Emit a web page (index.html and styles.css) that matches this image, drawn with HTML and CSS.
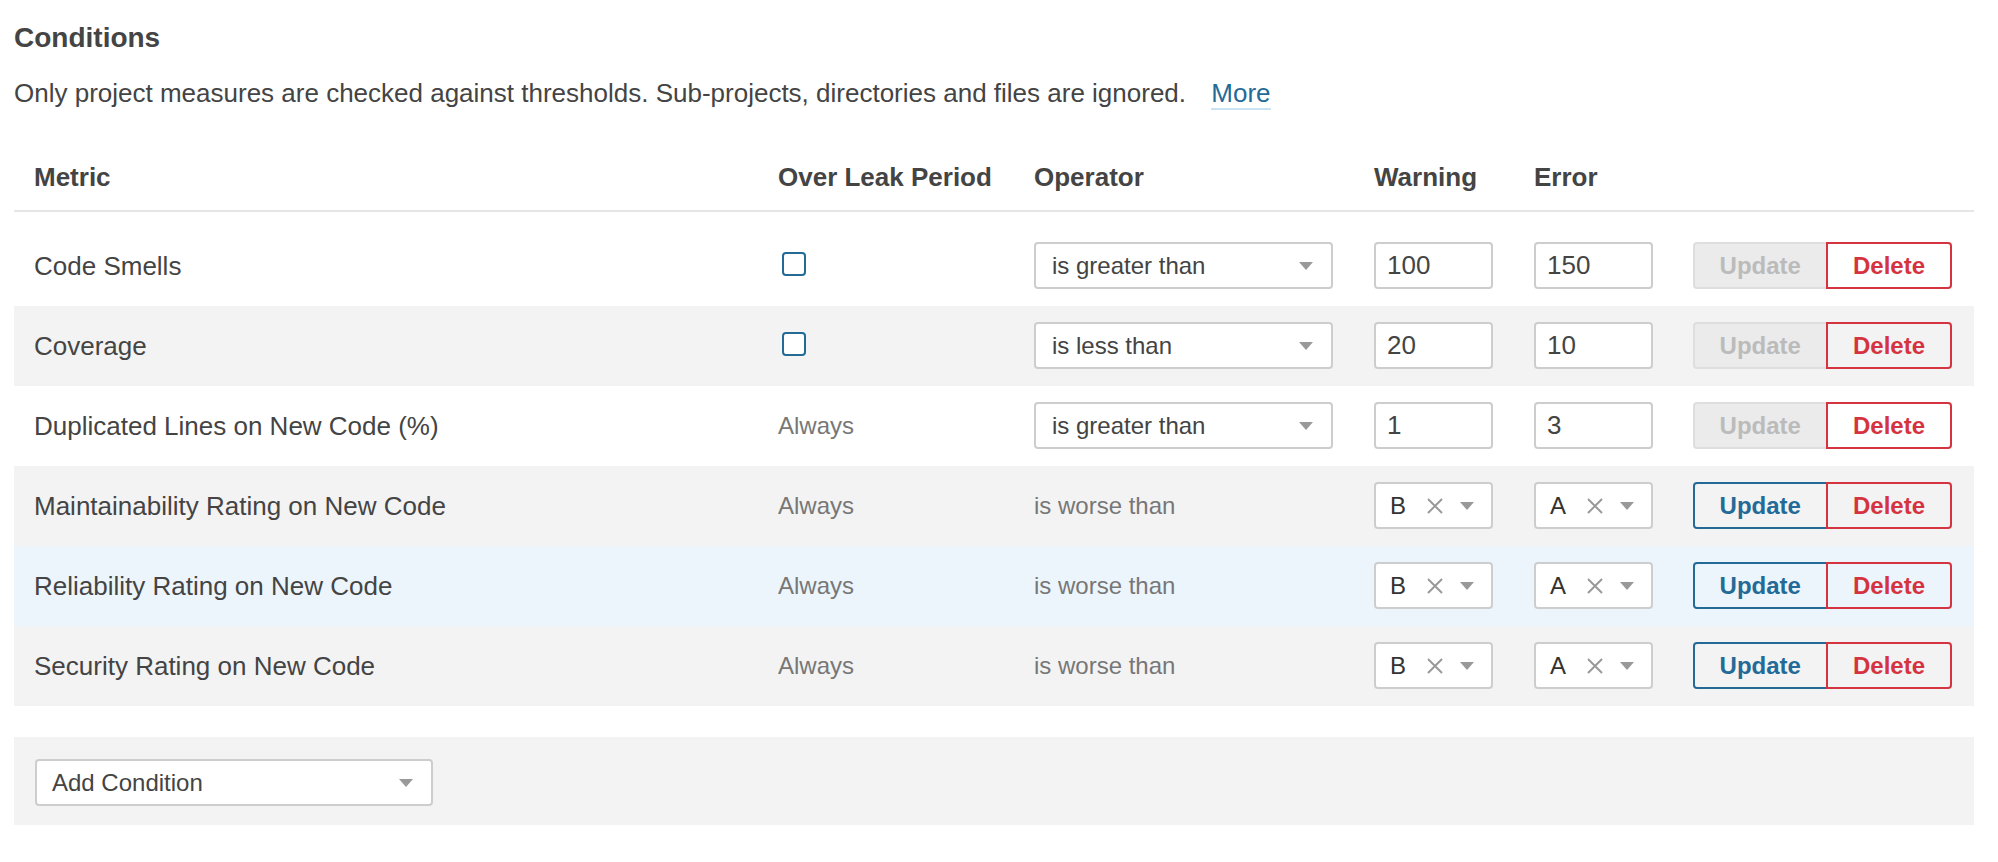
FILE: index.html
```html
<!DOCTYPE html>
<html lang="en">
<head>
<meta charset="utf-8">
<title>Conditions</title>
<link rel="stylesheet" href="styles.css">
</head>
<body>
<div class="page">
  <h3 class="title">Conditions</h3>
  <p class="intro">Only project measures are checked against thresholds. Sub-projects, directories and files are ignored. <a class="more" href="#">More</a></p>

  <table class="conds">
    <colgroup>
      <col class="c-metric"><col class="c-leak"><col class="c-op"><col class="c-warn"><col class="c-err"><col class="c-act">
    </colgroup>
    <thead>
      <tr><th>Metric</th><th>Over Leak Period</th><th>Operator</th><th>Warning</th><th>Error</th><th></th></tr>
    </thead>
    <tbody>
      <tr>
        <td>Code Smells</td>
        <td><span class="checkbox"></span></td>
        <td><div class="select op"><span class="select-value">is greater than</span><span class="arrow"></span></div></td>
        <td><input class="num" type="text" value="100"></td>
        <td><input class="num" type="text" value="150"></td>
        <td><div class="btns"><button class="btn btn-update" disabled>Update</button><button class="btn btn-delete">Delete</button></div></td>
      </tr>
      <tr class="row-alt">
        <td>Coverage</td>
        <td><span class="checkbox"></span></td>
        <td><div class="select op"><span class="select-value">is less than</span><span class="arrow"></span></div></td>
        <td><input class="num" type="text" value="20"></td>
        <td><input class="num" type="text" value="10"></td>
        <td><div class="btns"><button class="btn btn-update" disabled>Update</button><button class="btn btn-delete">Delete</button></div></td>
      </tr>
      <tr>
        <td>Duplicated Lines on New Code (%)</td>
        <td class="muted">Always</td>
        <td><div class="select op"><span class="select-value">is greater than</span><span class="arrow"></span></div></td>
        <td><input class="num" type="text" value="1"></td>
        <td><input class="num" type="text" value="3"></td>
        <td><div class="btns"><button class="btn btn-update" disabled>Update</button><button class="btn btn-delete">Delete</button></div></td>
      </tr>
      <tr class="row-alt">
        <td>Maintainability Rating on New Code</td>
        <td class="muted">Always</td>
        <td class="muted">is worse than</td>
        <td><div class="select rating"><span class="rating-value">B</span><svg class="clear" viewBox="0 0 18 18" width="18" height="18"><path d="M2 2 L16 16 M16 2 L2 16" stroke="#999" stroke-width="2" fill="none"/></svg><span class="arrow"></span></div></td>
        <td><div class="select rating"><span class="rating-value">A</span><svg class="clear" viewBox="0 0 18 18" width="18" height="18"><path d="M2 2 L16 16 M16 2 L2 16" stroke="#999" stroke-width="2" fill="none"/></svg><span class="arrow"></span></div></td>
        <td><div class="btns"><button class="btn btn-update">Update</button><button class="btn btn-delete">Delete</button></div></td>
      </tr>
      <tr class="row-hl">
        <td>Reliability Rating on New Code</td>
        <td class="muted">Always</td>
        <td class="muted">is worse than</td>
        <td><div class="select rating"><span class="rating-value">B</span><svg class="clear" viewBox="0 0 18 18" width="18" height="18"><path d="M2 2 L16 16 M16 2 L2 16" stroke="#999" stroke-width="2" fill="none"/></svg><span class="arrow"></span></div></td>
        <td><div class="select rating"><span class="rating-value">A</span><svg class="clear" viewBox="0 0 18 18" width="18" height="18"><path d="M2 2 L16 16 M16 2 L2 16" stroke="#999" stroke-width="2" fill="none"/></svg><span class="arrow"></span></div></td>
        <td><div class="btns"><button class="btn btn-update">Update</button><button class="btn btn-delete">Delete</button></div></td>
      </tr>
      <tr class="row-alt">
        <td>Security Rating on New Code</td>
        <td class="muted">Always</td>
        <td class="muted">is worse than</td>
        <td><div class="select rating"><span class="rating-value">B</span><svg class="clear" viewBox="0 0 18 18" width="18" height="18"><path d="M2 2 L16 16 M16 2 L2 16" stroke="#999" stroke-width="2" fill="none"/></svg><span class="arrow"></span></div></td>
        <td><div class="select rating"><span class="rating-value">A</span><svg class="clear" viewBox="0 0 18 18" width="18" height="18"><path d="M2 2 L16 16 M16 2 L2 16" stroke="#999" stroke-width="2" fill="none"/></svg><span class="arrow"></span></div></td>
        <td><div class="btns"><button class="btn btn-update">Update</button><button class="btn btn-delete">Delete</button></div></td>
      </tr>
    </tbody>
  </table>

  <div class="add">
    <div class="select add-select"><span class="select-value">Add Condition</span><span class="arrow"></span></div>
  </div>
</div>
</body>
</html>
```

FILE: styles.css
```css
body {
  margin: 0;
  background: #fff;
  color: #444;
  font-family: "Liberation Sans", Arial, Helvetica, sans-serif;
}

.page {
  padding: 22px 24px 0 14px;
}

.title {
  margin: 0;
  font-size: 28px;
  line-height: 32px;
  font-weight: bold;
  color: #444;
}

.intro {
  margin: 21px 0 0;
  font-size: 26px;
  line-height: 36px;
}

.more {
  margin-left: 18px;
  color: #236a97;
  text-decoration: none;
  border-bottom: 2px solid #cae3f2;
}

.conds {
  margin-top: 24px;
  width: 1960px;
  table-layout: fixed;
  border-collapse: collapse;
}

.c-metric { width: 744px; }
.c-leak { width: 256px; }
.c-op { width: 340px; }
.c-warn { width: 160px; }
.c-err { width: 160px; }
.c-act { width: 300px; }

.conds th {
  padding: 24px 20px 15px;
  text-align: left;
  white-space: nowrap;
  font-size: 26px;
  line-height: 36px;
  font-weight: bold;
  border-bottom: 2px solid #e6e6e6;
}

.conds td {
  padding: 16px 20px 17px;
  font-size: 26px;
  line-height: 36px;
  vertical-align: middle;
  white-space: nowrap;
}

.conds tbody tr:first-child td {
  padding-top: 30px;
}

.row-alt { background: #f3f3f3; }
.row-hl { background: #edf5fc; }

.conds td.muted {
  font-size: 24px;
  color: #777;
}

.checkbox {
  display: block;
  box-sizing: border-box;
  width: 24px;
  height: 24px;
  margin: 0 0 3px 4px;
  border: 2px solid #236a97;
  border-radius: 4px;
  background: #fff;
}

.select {
  display: flex;
  align-items: center;
  box-sizing: border-box;
  height: 47px;
  border: 2px solid #cdcdcd;
  border-radius: 4px;
  background: #fff;
  font-size: 24px;
  line-height: 30px;
  color: #444;
}

.select-value { flex: 1; }

.arrow {
  width: 0;
  height: 0;
  border-left: 7.5px solid transparent;
  border-right: 7.5px solid transparent;
  border-top: 8px solid #999;
}

.select.op {
  width: 299px;
  padding: 0 18px 0 16px;
}

.select.rating {
  width: 119px;
  padding: 0 16px 0 14px;
}

.rating-value {
  width: 16px;
  margin-right: 20px;
  color: #333;
}

.clear {
  display: block;
  margin-right: 16px;
}

.num {
  display: block;
  box-sizing: border-box;
  width: 119px;
  height: 47px;
  margin: 0;
  padding: 0 11px;
  border: 2px solid #cdcdcd;
  border-radius: 4px;
  background: #fff;
  color: #444;
  font-family: "Liberation Sans", Arial, Helvetica, sans-serif;
  font-size: 26px;
}

.btns {
  display: flex;
  justify-content: flex-end;
  margin-right: 2px;
}

.btn {
  box-sizing: border-box;
  height: 47px;
  margin: 0;
  padding: 0 25px;
  border: 2px solid;
  background: transparent;
  font-family: "Liberation Sans", Arial, Helvetica, sans-serif;
  font-size: 24px;
  font-weight: bold;
  cursor: pointer;
}

.btn-update {
  border-color: #236a97;
  color: #236a97;
  border-radius: 4px 0 0 4px;
}

.btn-update:disabled {
  background: #ebebeb;
  border-color: #dedede;
  color: #bbb;
  cursor: default;
}

.btn-delete {
  margin-left: -2px;
  border-color: #d4333f;
  color: #d4333f;
  border-radius: 0 4px 4px 0;
}

.add {
  margin-top: 31px;
  padding: 22px 21px 19px;
  background: #f3f3f3;
}

.select.add-select {
  width: 398px;
  padding: 0 18px 0 15px;
}
```
